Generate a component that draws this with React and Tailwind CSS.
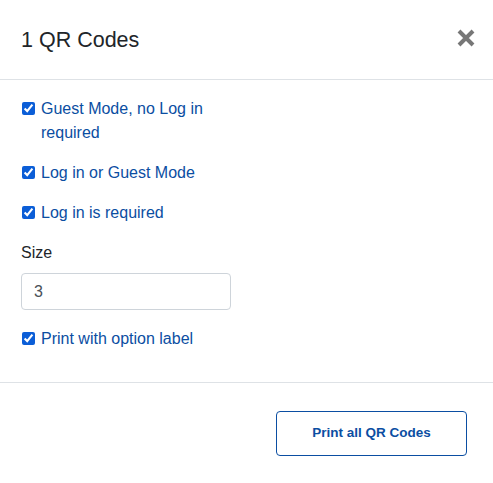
const OPTIONS = [
  'Guest Mode, no Log in required',
  'Log in or Guest Mode',
  'Log in is required',
]

function CheckRow({ label, className = '' }) {
  return (
    <label className={`flex items-start text-[16px] leading-[24px] text-[#0b4ea2] ${className}`}>
      <input
        type="checkbox"
        defaultChecked
        className="mt-[5px] ml-[1px] mr-[6px] h-[13px] w-[13px] shrink-0 accent-[#0b5ed7]"
      />
      <span>{label}</span>
    </label>
  )
}

export default function App() {
  return (
    <div
      className="h-[483px] w-[493px] bg-white"
      style={{ fontFamily: '"Liberation Sans", Arial, sans-serif' }}
    >
      <div className="flex h-[80px] items-center justify-between border-b border-[#dee2e6] pl-[21px] pr-[18px]">
        <h5 className="text-[21.5px] leading-[24px] text-[#212529]">1 QR Codes</h5>
        <button className="mb-[4px] text-[#777777]" aria-label="Close">
          <svg width="18" height="18" viewBox="0 0 18 18">
            <path d="M2 2 L16 16 M16 2 L2 16" stroke="currentColor" strokeWidth="4" strokeLinecap="butt" />
          </svg>
        </button>
      </div>

      <div className="w-[231px] px-[21px] pt-[17px] pb-[31px]">
        <div className="flex flex-col gap-[16px]">
          {OPTIONS.map((o) => (
            <CheckRow key={o} label={o} />
          ))}
        </div>
        <div className="mt-[16px] text-[16px] leading-[24px] text-[#212529]">Size</div>
        <input
          type="text"
          defaultValue="3"
          className="mt-[8px] h-[37px] w-[210px] rounded-[4px] border border-[#ced4da] px-[12px] text-[16px] text-[#495057] outline-none"
        />
        <CheckRow label="Print with option label" className="mt-[17px]" />
      </div>

      <div className="flex justify-end border-t border-[#dee2e6] pt-[28px] pr-[26px]">
        <button className="h-[45px] w-[191px] rounded-[4px] border border-[#0b4ea2] text-[13.5px] font-bold text-[#0b4ea2]">
          Print all QR Codes
        </button>
      </div>
    </div>
  )
}
